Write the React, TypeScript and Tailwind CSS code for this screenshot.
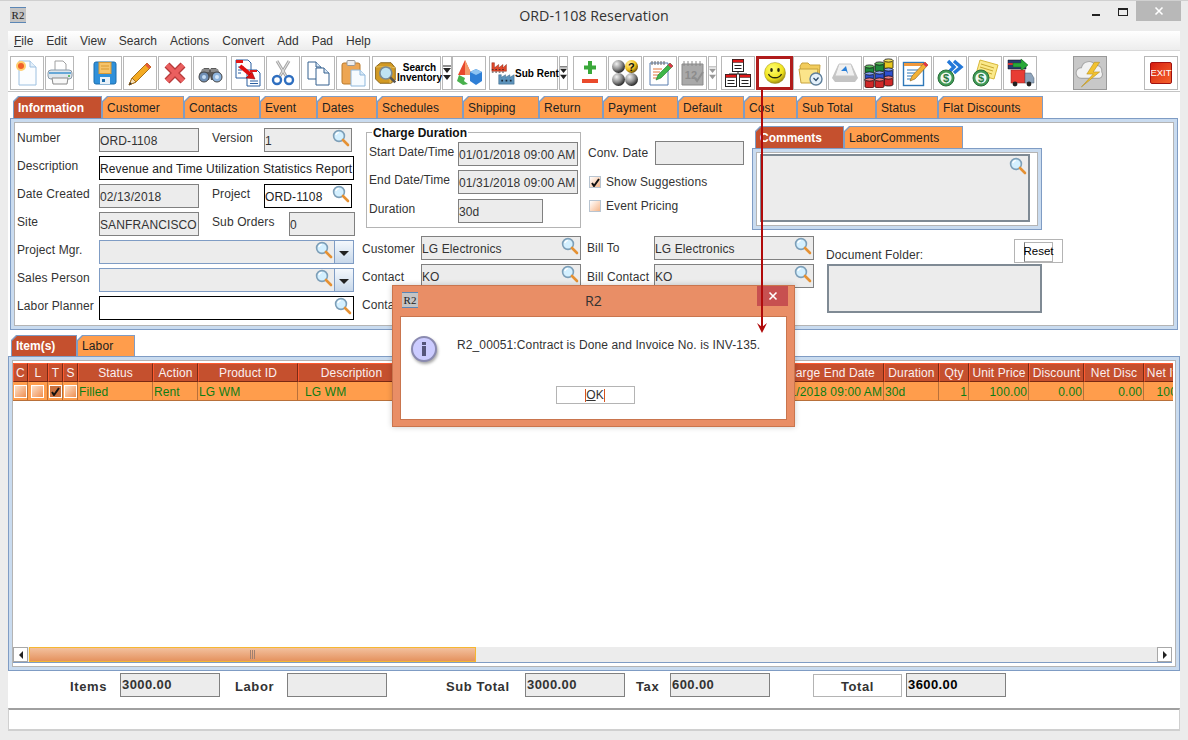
import type { ReactNode } from "react";

const R2Logo = () => (
  <div className="w-[16px] h-[16px] bg-[#c4c4c4] border-y border-[#5b86b5] flex items-center justify-center overflow-hidden shrink-0">
    <span className="text-[11px] leading-none text-[#222] font-['Liberation_Serif',serif]">R2</span>
  </div>
);

const Mag = () => (
  <svg width="18" height="18" viewBox="0 0 18 18" className="shrink-0">
    <circle cx="7" cy="7" r="5.4" fill="#d4f0ff" stroke="#7d9fb8" strokeWidth="1.6" />
    <path d="M3.8 6a3.5 3.5 0 0 1 3-2.6" stroke="#fff" strokeWidth="1.4" fill="none" />
    <path d="M11 11l5 5" stroke="#e59133" strokeWidth="2.6" strokeLinecap="round" />
  </svg>
);

const Drop = ({ gray }: { gray?: boolean }) => {
  const c = gray ? "#999" : "#222";
  return (
    <svg width="8" height="16" viewBox="0 0 8 16">
      <path d="M0 1h8" stroke={c} />
      <path d="M0 3h8L4 8z" fill={c} />
      <path d="M0 10h8l-4 5z" fill={c} />
    </svg>
  );
};

const Ico = ({ s = 28, children }: { s?: number; children: ReactNode }) => (
  <svg width={s} height={s} viewBox="0 0 28 28" className="shrink-0">
    {children}
  </svg>
);

const IconNew = () => (
  <Ico>
    <path d="M6 2h11l6 6v18H6z" fill="#fbfdff" stroke="#9dc0e0" />
    <path d="M17 2v6h6" fill="#e4eff9" stroke="#9dc0e0" />
    <circle cx="8" cy="7" r="5" fill="#ffcf70" />
    <circle cx="8" cy="7" r="3" fill="#f0602a" />
  </Ico>
);
const IconPrint = () => (
  <Ico>
    <path d="M9 2h8l3 3v9H9z" fill="#fff" stroke="#a0a0a0" />
    <rect x="2" y="11" width="24" height="9" rx="3" fill="#dfe6ec" stroke="#8a9aa8" />
    <path d="M3 14h22" stroke="#3f93d0" strokeWidth="1.5" />
    <path d="M6 19h16l-1 6H7z" fill="#f8f8f8" stroke="#8a8a8a" />
    <circle cx="23" cy="17" r="1" fill="#3fae49" />
  </Ico>
);
const IconSave = () => (
  <Ico>
    <rect x="3" y="3" width="22" height="22" rx="2" fill="#2f90da" stroke="#1c6cab" />
    <rect x="8" y="3.5" width="12" height="11" fill="#f6c46a" stroke="#d89a35" />
    <path d="M10 7h8M10 10h8" stroke="#d89a35" />
    <rect x="9" y="18" width="10" height="7" fill="#e8f1f8" />
    <rect x="11" y="20" width="3" height="3" fill="#1c6cab" />
  </Ico>
);
const IconPencil = () => (
  <Ico>
    <path d="M21 4l4 4-15 15-7 3 3-7z" fill="#f4ab23" stroke="#a9721c" />
    <path d="M6 19l4 4-7 3z" fill="#f6dfb8" stroke="#a9721c" />
    <path d="M21 4l4 4-2 2-4-4z" fill="#e55a3a" />
    <path d="M3 26l3-1-2-2z" fill="#333" />
  </Ico>
);
const IconDelete = () => (
  <Ico>
    <path d="M6 6l16 16M22 6L6 22" stroke="#b83a3a" strokeWidth="7" />
    <path d="M6 6l16 16M22 6L6 22" stroke="#ea5f5f" strokeWidth="4.5" />
  </Ico>
);
const IconBinoc = () => (
  <Ico>
    <path d="M3 15l5-6h5l1 2 1-2h5l5 6-4 6h-6l-1-4-1 4H7z" fill="#5a5a5a" />
    <path d="M6 10h7v3H5zM15 10h7l1 3h-8z" fill="#8b8b8b" />
    <circle cx="8" cy="18" r="5" fill="#6f8fb5" stroke="#444" />
    <circle cx="21" cy="18" r="5" fill="#8db3dc" stroke="#444" />
    <circle cx="8" cy="18" r="2" fill="#c4dcf4" />
    <circle cx="21" cy="18" r="2" fill="#d6e9fa" />
  </Ico>
);
const IconCopyArrow = () => (
  <Ico>
    <path d="M2 1h12l3 3v15H2z" fill="#fff" stroke="#2b5fa0" />
    <rect x="2" y="1" width="7" height="3" fill="#e01818" />
    <path d="M4 8h6M4 11h4M4 14h3" stroke="#2b5fa0" />
    <path d="M13 11h10l3 3v13H13z" fill="#fff" stroke="#2b5fa0" />
    <rect x="16" y="11" width="7" height="2" fill="#e01818" />
    <path d="M16 22h8M16 24.5h8" stroke="#2b5fa0" />
    <path d="M6 7l11 9" stroke="#e01010" strokeWidth="4" />
    <path d="M21 20l-9-1 6-6z" fill="#e01010" stroke="#700" strokeWidth=".5" />
  </Ico>
);
const IconCut = () => (
  <Ico>
    <path d="M8 2l9 15M20 2l-9 15" stroke="#a8a8a8" strokeWidth="3" />
    <path d="M8 2l9 15M20 2l-9 15" stroke="#e4e4e4" strokeWidth="1" />
    <circle cx="8" cy="21" r="4" fill="none" stroke="#2f6fc0" strokeWidth="2.4" />
    <circle cx="20" cy="21" r="4" fill="none" stroke="#2f6fc0" strokeWidth="2.4" />
  </Ico>
);
const Doc = ({ x, y }: { x: number; y: number }) => (
  <g transform={`translate(${x} ${y})`}>
    <path d="M0 0h8l5 5v12H0z" fill="#fff" stroke="#34608f" />
    <path d="M8 0v5h5" fill="#d8e6f4" stroke="#34608f" />
  </g>
);
const IconCopy = () => (
  <Ico>
    <Doc x={4} y={3} />
    <Doc x={12} y={9} />
  </Ico>
);
const IconPaste = () => (
  <Ico>
    <rect x="3" y="4" width="18" height="21" rx="2" fill="#eda653" stroke="#b97a2c" />
    <rect x="8" y="1.5" width="8" height="5" rx="1" fill="#eee" stroke="#999" />
    <path d="M12 11h9l5 5v11H12z" fill="#f6fbff" stroke="#8fb8dc" />
    <path d="M21 11v5h5" fill="#d8e8f5" stroke="#8fb8dc" />
  </Ico>
);
const IconSearchBox = () => (
  <Ico s={24}>
    <path d="M3 7l6-5h12l5 6v14l-5 4H8l-5-5z" fill="#d29a24" stroke="#7d5a12" />
    <path d="M3 7h17l6 1M20 7v19" stroke="#f4cf6c" />
    <circle cx="15" cy="14" r="7" fill="#bfe3f2" stroke="#7a8a94" strokeWidth="2" />
    <path d="M20 19l6 6" stroke="#555" strokeWidth="3" />
  </Ico>
);
const IconShapes = () => (
  <Ico>
    <path d="M10 1l7 15H3z" fill="#e8482c" />
    <path d="M10 1l7 15h-7z" fill="#f59a6a" />
    <path d="M15 13l6-3 6 3v9l-6 4-6-4z" fill="#2f7fd6" />
    <path d="M15 13l6 3 6-3-6-3z" fill="#8fc4f2" />
    <path d="M4 16l-2 6 6 4 5-1-4-3 1-3z" fill="#48b04c" />
  </Ico>
);
const IconFactory = () => (
  <Ico s={24}>
    <path d="M1 2h3v6l5-4v4l5-4v4l4-4v8H1z" fill="#e2482a" stroke="#7a2110" strokeWidth=".5" />
    <path d="M1 10h15M1 13h15" stroke="#3a2a2a" strokeDasharray="2 2" />
    <path d="M9 16h3v3l5-3v3l5-3v3l5-3v11H9z" fill="#5d93bb" stroke="#2f5a7a" strokeWidth=".5" />
    <path d="M12 23h12" stroke="#1a2a3a" strokeWidth="2" strokeDasharray="2 3" />
  </Ico>
);
const IconPlusMinus = () => (
  <Ico>
    <path d="M14 2v13M8 8.5h12" stroke="#3aa83a" strokeWidth="4" />
    <path d="M6 22h16" stroke="#ea4a2c" strokeWidth="4" />
  </Ico>
);
const IconSpheres = () => (
  <svg width="28" height="28" viewBox="0 0 28 28" className="shrink-0">
    <defs>
      <radialGradient id="ball" cx="35%" cy="30%" r="75%">
        <stop offset="0%" stopColor="#f2f2f2" />
        <stop offset="55%" stopColor="#8c8c8c" />
        <stop offset="100%" stopColor="#1c1c1c" />
      </radialGradient>
      <radialGradient id="ballY" cx="35%" cy="30%" r="75%">
        <stop offset="0%" stopColor="#fff3a8" />
        <stop offset="60%" stopColor="#f2c018" />
        <stop offset="100%" stopColor="#5a4000" />
      </radialGradient>
    </defs>
    <circle cx="7.5" cy="7.5" r="6.5" fill="url(#ball)" />
    <circle cx="20.5" cy="7.5" r="6.5" fill="url(#ballY)" />
    <circle cx="7.5" cy="20.5" r="6.5" fill="url(#ball)" />
    <circle cx="20.5" cy="20.5" r="6.5" fill="url(#ball)" />
    <text x="20.5" y="11.5" textAnchor="middle" fontSize="11" fontWeight="700" fill="#111" fontFamily="Liberation Sans">?</text>
  </svg>
);
const IconNote = () => (
  <Ico>
    <path d="M4 4h18v22H4z" fill="#fff" stroke="#5a7fb0" />
    <path d="M6 2v4M9 2v4M12 2v4M15 2v4M18 2v4" stroke="#666" />
    <path d="M7 10h9M7 13h7M7 16h6M7 19h5" stroke="#e2763a" />
    <path d="M24 4l3 3-12 12-5 2 2-5z" fill="#3cb648" stroke="#1e7a2a" strokeWidth=".6" />
    <path d="M24 4l3 3-2 2-3-3z" fill="#e0344a" />
  </Ico>
);
const IconCal = () => (
  <Ico>
    <path d="M3 5h21v21H3z" fill="#a9a9a9" stroke="#8a8a8a" />
    <path d="M5 2v5M9 2v5M13 2v5M17 2v5M21 2v5" stroke="#8a8a8a" />
    <text x="12" y="20" textAnchor="middle" fontSize="11" fontWeight="700" fill="#8c8c8c" fontFamily="Liberation Sans">12</text>
    <path d="M15 18l3 4 6-9" stroke="#8f8f8f" strokeWidth="2" fill="none" />
  </Ico>
);
const OrgDoc = ({ x, y }: { x: number; y: number }) => (
  <g transform={`translate(${x} ${y})`}>
    <rect x="0" y="0" width="11" height="12" fill="#fff" stroke="#222" />
    <rect x="0" y="0" width="11" height="3" fill="#e01818" stroke="#222" strokeWidth=".5" />
    <path d="M2 6h7M2 9h7" stroke="#222" />
  </g>
);
const IconOrg = () => (
  <Ico>
    <path d="M14 12v3M5 17v-2h18v2" stroke="#222" fill="none" />
    <OrgDoc x={8.5} y={0.5} />
    <OrgDoc x={1.5} y={15.5} />
    <OrgDoc x={15.5} y={15.5} />
  </Ico>
);
const IconSmile = () => (
  <svg width="24" height="24" viewBox="0 0 24 24" className="shrink-0">
    <defs>
      <radialGradient id="smile" cx="40%" cy="30%" r="75%">
        <stop offset="0%" stopColor="#ffff70" />
        <stop offset="65%" stopColor="#efe21c" />
        <stop offset="100%" stopColor="#8c7a10" />
      </radialGradient>
    </defs>
    <circle cx="12" cy="12" r="10.5" fill="url(#smile)" stroke="#9a8a20" strokeWidth=".5" />
    <ellipse cx="8.5" cy="9" rx="1.3" ry="2" fill="#2a2a10" />
    <ellipse cx="15.5" cy="9" rx="1.3" ry="2" fill="#2a2a10" />
    <path d="M5.5 13c2 5 11 5 13 0" stroke="#2a2a10" strokeWidth="1.3" fill="none" />
  </svg>
);
const IconFolderClock = () => (
  <Ico>
    <path d="M4 7l2-3h6l2 2h10l-1 14H6z" fill="#f2cc5c" stroke="#c7a23c" />
    <path d="M3 10h19l-2 14H5z" fill="#fbe48a" stroke="#c7a23c" />
    <circle cx="20" cy="20" r="6" fill="#e4f0fa" stroke="#5f7f9a" strokeWidth="1.4" />
    <path d="M17.5 19l2.5 2.5 2.5-3" stroke="#2b4a66" strokeWidth="1.2" fill="none" />
  </Ico>
);
const IconKey = () => (
  <Ico>
    <path d="M7 6h14l6 13-3 4H4l-3-4z" fill="#c4c4c4" />
    <path d="M8 5h12l4 12H4z" fill="#f0f0f0" stroke="#c8c8c8" />
    <path d="M10 12l5-5 2 8-2-3z" fill="#2a7fd8" />
  </Ico>
);
const Barrel = ({ x, y, top, body }: { x: number; y: number; top: string; body: string }) => (
  <g transform={`translate(${x} ${y})`}>
    <path d="M0 1.5v7c0 2 9 2 9 0v-7z" fill={body} stroke="#111" strokeWidth=".8" />
    <ellipse cx="4.5" cy="1.5" rx="4.5" ry="1.6" fill={top} stroke="#111" strokeWidth=".8" />
  </g>
);
const IconBarrels = () => (
  <svg width="32" height="30" viewBox="0 0 32 30" className="shrink-0">
    <Barrel x={20} y={1} top="#f0e060" body="#e8c820" />
    <Barrel x={20} y={10} top="#8aa4f0" body="#2e50d0" />
    <Barrel x={20} y={18} top="#f08080" body="#d02828" />
    <Barrel x={11} y={4} top="#60c060" body="#1e8a3a" />
    <Barrel x={11} y={13} top="#8aa4f0" body="#2e50d0" />
    <Barrel x={11} y={20} top="#f08080" body="#d02828" />
    <Barrel x={1} y={7} top="#60c060" body="#1e8a3a" />
    <Barrel x={1} y={14} top="#8aa4f0" body="#2e50d0" />
    <Barrel x={1} y={20} top="#f08080" body="#d02828" />
  </svg>
);
const IconDocPen = () => (
  <Ico>
    <rect x="2.5" y="3.5" width="20" height="23" fill="#fff" stroke="#2f78b8" strokeWidth="1.4" />
    <rect x="3" y="4" width="19" height="3" fill="#f0983c" />
    <path d="M6 11h11M6 14h8M6 17h7M6 20h5" stroke="#2f78b8" strokeWidth="1.2" />
    <path d="M24 3l3 3-13 14-5 2 2-5z" fill="#f2b134" stroke="#8a6018" strokeWidth=".6" />
    <path d="M24 3l3 3-2 2-3-3z" fill="#e0344a" />
  </Ico>
);
const Coin = () => (
  <g>
    <circle cx="10" cy="19" r="8" fill="#3f9a55" stroke="#2a6e3a" />
    <circle cx="10" cy="19" r="5.6" fill="#f2f8f2" />
    <text x="10" y="23" textAnchor="middle" fontSize="11" fontWeight="700" fill="#2a7a40" fontFamily="Liberation Sans">$</text>
  </g>
);
const IconCoinArrow = () => (
  <Ico>
    <path d="M12 2l6 6-6 6M18 2l7 6-7 6" stroke="#2478d8" strokeWidth="3.4" fill="none" />
    <Coin />
  </Ico>
);
const IconCoinNote = () => (
  <Ico>
    <path d="M9 1l18 5-4 14-18-5z" fill="#fbe98a" stroke="#d8b83a" />
    <path d="M10 5l13 4M9 8l13 4M8 11l13 4" stroke="#c8a830" />
    <Coin />
  </Ico>
);
const IconTrucks = () => (
  <svg width="30" height="30" viewBox="0 0 30 30" className="shrink-0">
    <path d="M3 2h14l4 4v5H3z" fill="#2a3a70" stroke="#111" strokeWidth=".5" />
    <path d="M3 6h12" stroke="#d03030" strokeWidth="2" />
    <path d="M8 5h8V1l7 6-7 6V9H8z" fill="#28a838" stroke="#126a1e" strokeWidth=".5" />
    <rect x="6" y="12" width="14" height="13" fill="#e83c34" stroke="#8a1c18" strokeWidth=".5" />
    <path d="M20 15h6l3 5v5h-9z" fill="#8ea4bc" stroke="#4a5a6a" strokeWidth=".5" />
    <circle cx="10" cy="26" r="2.4" fill="#222" />
    <circle cx="24" cy="26" r="2.4" fill="#222" />
  </svg>
);
const IconBolt = () => (
  <Ico s={30}>
    <path d="M6 19a5 5 0 0 1 0-10 7 7 0 0 1 13-2 5 5 0 0 1 6 6 4 4 0 0 1-2 6z" fill="#f2f2f2" stroke="#a8a8a8" />
    <path d="M18 4l-7 11h6L6 27l17-14h-6l6-9z" fill="#f2c230" stroke="#b08818" strokeWidth=".5" />
  </Ico>
);

const Btn = ({ className = "w-[34px]", children }: { className?: string; children?: ReactNode }) => (
  <div className={`h-[34px] border border-[#b8b8b8] bg-white flex items-center justify-center shrink-0 ${className}`}>
    {children}
  </div>
);

const Tab = ({ w, label, active }: { w: string; label: string; active?: boolean }) => (
  <div className={`h-full p-px pb-0 bg-[#7f9cc4] shrink-0 [clip-path:polygon(5px_0,100%_0,100%_100%,0_100%,0_5px)] ${w}`}>
    <div
      className={`h-full pl-[4px] flex items-center whitespace-nowrap text-[12px] [clip-path:polygon(5px_0,100%_0,100%_100%,0_100%,0_5px)] ${
        active ? "bg-[#c5502e] text-white font-bold tracking-normal" : "bg-[#ff9d4c] text-[#222]"
      }`}
    >
      {label}
    </div>
  </div>
);

const Frame = ({ className, children }: { className: string; children: ReactNode }) => (
  <div className={`border border-[#7f9cc4] bg-[#c9dbef] p-[3px] ${className}`}>
    <div className="h-full border border-[#b4b4b4] bg-white">{children}</div>
  </div>
);

const Label = ({ w, children, className = "" }: { w: string; children: ReactNode; className?: string }) => (
  <div className={`h-[24px] flex items-center pb-[5px] text-[12px] text-[#333] whitespace-nowrap shrink-0 ${w} ${className}`}>
    {children}
  </div>
);

type FieldKind = "gray" | "black" | "blue";

const Field = ({ w, value, kind = "gray", mag, drop }: { w: string; value?: string; kind?: FieldKind; mag?: boolean; drop?: boolean }) => {
  const skin =
    kind === "black" ? "border-black bg-white text-[#222]" : kind === "blue" ? "border-[#7f9cc4] bg-[#ececec]" : "border-[#808080] bg-[#ececec] text-[#333]";
  return (
    <div className={`h-[24px] border flex shrink-0 overflow-hidden ${skin} ${w}`}>
      <div className="flex-1 min-w-0 pt-[2px] flex items-center text-[12px] whitespace-nowrap overflow-hidden">{value}</div>
      {mag && (
        <div className="pr-px shrink-0">
          <Mag />
        </div>
      )}
      {drop && (
        <div className="w-[19px] h-full border-l border-[#7f9cc4] bg-gradient-to-b from-[#f4f8fc] to-[#c8d8ea] flex items-center justify-center shrink-0">
          <div className="w-0 h-0 border-x-[5px] border-x-transparent border-t-[5px] border-t-[#222] mt-[3px]" />
        </div>
      )}
    </div>
  );
};

const Check = ({ on }: { on?: boolean }) => (
  <div className="w-[12px] h-[12px] border border-[#b8c4d0] bg-gradient-to-br from-white to-[#f4b68a] flex items-center justify-center shrink-0">
    {on && (
      <svg width="9" height="9" viewBox="0 0 9 9">
        <path d="M1 5l2 3 5-7" stroke="#111" strokeWidth="2" fill="none" />
      </svg>
    )}
  </div>
);

const CellCheck = ({ on }: { on?: boolean }) => (
  <div className="h-full flex items-center justify-center border-r border-[#b8703a]">
    <div className={`w-[13px] h-[13px] border border-white flex items-center justify-center ${on ? "bg-[#c8703e]" : "bg-gradient-to-br from-[#fbe0c8] to-[#ee8f50]"}`}>
      {on && (
        <svg width="9" height="9" viewBox="0 0 9 9">
          <path d="M1 5l2 3 5-7" stroke="#111" strokeWidth="2" fill="none" />
        </svg>
      )}
    </div>
  </div>
);

const TotalField = ({ w = "w-[100px]", value, strong }: { w?: string; value?: string; strong?: boolean }) => (
  <div className={`h-[24px] border border-[#808080] bg-[#ececec] pl-px pb-px flex items-center text-[13px] font-bold tracking-[0.4px] shrink-0 ${strong ? "text-black" : "text-[#333]"} ${w}`}>
    {value}
  </div>
);

const TotalLabel = ({ w, children }: { w: string; children: ReactNode }) => (
  <div className={`text-[13px] font-bold tracking-[0.6px] text-[#333] whitespace-nowrap shrink-0 pt-[3px] ${w}`}>{children}</div>
);

const columns = ["C", "L", "T", "S", "Status", "Action", "Product ID", "Description", "", "Charge End Date", "Duration", "Qty", "Unit Price", "Discount", "Net Disc", "Net Item"];
const menus = ["Edit", "View", "Search", "Actions", "Convert", "Add", "Pad", "Help"];

export default function App() {
  return (
    <div className="relative w-[1188px] h-[740px] overflow-hidden bg-[#ececec] border-t border-[#d0d0d0] flex flex-col font-['Liberation_Sans',Arial,sans-serif] text-[12px] tracking-[0.12px] text-[#333]">
      {/* title bar */}
      <div className="h-[30px] shrink-0 grid grid-cols-[1fr_auto_1fr] tracking-normal">
        <div className="pl-[10px] pt-[6px]">
          <R2Logo />
        </div>
        <div className="pt-[5px] text-[14.25px] leading-[20px] text-[#333] font-['Open_Sans',sans-serif]">ORD-1108 Reservation</div>
        <div className="flex justify-end items-start pr-[7px]">
          <div className="w-[8px] h-[2px] bg-[#222] mt-[13px]" />
          <div className="w-[10px] h-[8px] border border-[#222] border-t-2 mt-[7px] ml-[18px]" />
          <div className="w-[45px] h-[20px] bg-[#b8b8b8] ml-[8px] flex items-center justify-center">
            <svg width="10" height="10" viewBox="0 0 10 10">
              <path d="M1.5 1.5l7 7M8.5 1.5l-7 7" stroke="#fff" strokeWidth="1.6" />
            </svg>
          </div>
        </div>
      </div>

      <div className="mx-2 h-[700px] shrink-0 bg-white flex flex-col">
        {/* menu */}
        <div className="h-[20px] shrink-0 bg-gradient-to-b from-white to-[#ededed] border-b border-[#d8d8d8] flex items-center gap-[13px] pl-[6px] text-[12px] tracking-normal text-[#333]">
          <span>
            <span className="underline">F</span>ile
          </span>
          {menus.map((m) => (
            <span key={m}>{m}</span>
          ))}
        </div>

        {/* toolbar */}
        <div className="h-[41px] shrink-0 border-b border-[#c4c4c4] pl-[2px] pt-[5px] flex gap-px">
          <Btn><IconNew /></Btn>
          <Btn className="w-[29px]"><IconPrint /></Btn>
          <Btn className="w-[34px] ml-[13px]"><IconSave /></Btn>
          <Btn><IconPencil /></Btn>
          <Btn><IconDelete /></Btn>
          <Btn><IconBinoc /></Btn>
          <Btn className="w-[34px] ml-[3px]"><IconCopyArrow /></Btn>
          <Btn><IconCut /></Btn>
          <Btn><IconCopy /></Btn>
          <Btn><IconPaste /></Btn>
          <Btn className="w-[69px] ml-px justify-start">
            <IconSearchBox />
            <div className="text-[10px] leading-[10px] font-bold text-black text-center tracking-normal whitespace-nowrap">
              Search
              <br />
              Inventory
            </div>
          </Btn>
          <Btn className="w-[10px]"><Drop /></Btn>
          <Btn className="w-[34px] -ml-px"><IconShapes /></Btn>
          <Btn className="w-[69px] ml-[2px] pl-px justify-start">
            <IconFactory />
            <span className="text-[10px] font-bold text-black tracking-normal whitespace-nowrap">Sub Rent</span>
          </Btn>
          <Btn className="w-[9px]"><Drop /></Btn>
          <Btn className="w-[34px] ml-[4px]"><IconPlusMinus /></Btn>
          <Btn><IconSpheres /></Btn>
          <Btn><IconNote /></Btn>
          <Btn className="w-[29px]"><IconCal /></Btn>
          <Btn className="w-[9px]"><Drop gray /></Btn>
          <Btn className="w-[34px] ml-[3px]"><IconOrg /></Btn>
          <div className="h-[34px] w-[37px] border-[3px] border-[#b01c1c] bg-white flex items-center justify-center shrink-0">
            <IconSmile />
          </div>
          <Btn className="w-[34px] -ml-px"><IconFolderClock /></Btn>
          <Btn><IconKey /></Btn>
          <Btn><IconBarrels /></Btn>
          <Btn><IconDocPen /></Btn>
          <Btn><IconCoinArrow /></Btn>
          <Btn><IconCoinNote /></Btn>
          <Btn><IconTrucks /></Btn>
          <Btn className="w-[34px] ml-[35px] !bg-[#c8c8c8] !border-[#999]"><IconBolt /></Btn>
          <Btn className="w-[34px] ml-[36px]">
            <div className="w-[22px] h-[22px] rounded-[2px] bg-gradient-to-br from-[#d81810] to-[#f4602a] border border-[#a01010] flex items-center justify-center text-[9.5px] tracking-normal text-white">EXIT</div>
          </Btn>
        </div>

        {/* header tabs */}
        <div className="h-[22px] mt-[4px] shrink-0 pl-[5px] flex">
          <Tab w="w-[89px]" label="Information" active />
          <Tab w="w-[82px]" label="Customer" />
          <Tab w="w-[76px]" label="Contacts" />
          <Tab w="w-[57px]" label="Event" />
          <Tab w="w-[60px]" label="Dates" />
          <Tab w="w-[86px]" label="Schedules" />
          <Tab w="w-[76px]" label="Shipping" />
          <Tab w="w-[64px]" label="Return" />
          <Tab w="w-[75px]" label="Payment" />
          <Tab w="w-[66px]" label="Default" />
          <Tab w="w-[53px]" label="Cost" />
          <Tab w="w-[79px]" label="Sub Total" />
          <Tab w="w-[62px]" label="Status" />
          <Tab w="w-[105px]" label="Flat Discounts" />
        </div>

        {/* header form */}
        <Frame className="h-[212px] ml-[2px] mr-[2px] shrink-0">
          <div className="h-full flex pl-[2px]">
            {/* left column */}
            <div className="w-[345px] pt-[5px] flex flex-col gap-[4px] shrink-0">
              <div className="flex">
                <Label w="w-[82px]">Number</Label>
                <Field w="w-[100px]" value="ORD-1108" />
                <Label w="w-[65px]" className="pl-[13px]">Version</Label>
                <Field w="w-[88px]" value="1" mag />
              </div>
              <div className="flex">
                <Label w="w-[82px]">Description</Label>
                <Field w="w-[255px]" kind="black" value="Revenue and Time Utilization Statistics Report" />
              </div>
              <div className="flex">
                <Label w="w-[82px]">Date Created</Label>
                <Field w="w-[100px]" value="02/13/2018" />
                <Label w="w-[65px]" className="pl-[13px]">Project</Label>
                <Field w="w-[88px]" kind="black" value="ORD-1108" mag />
              </div>
              <div className="flex">
                <Label w="w-[82px]">Site</Label>
                <Field w="w-[100px]" value="SANFRANCISCO" />
                <Label w="w-[90px]" className="pl-[13px]">Sub Orders</Label>
                <Field w="w-[66px]" value="0" />
              </div>
              <div className="flex">
                <Label w="w-[82px]">Project Mgr.</Label>
                <Field w="w-[255px]" kind="blue" mag drop />
              </div>
              <div className="flex">
                <Label w="w-[82px]">Sales Person</Label>
                <Field w="w-[255px]" kind="blue" mag drop />
              </div>
              <div className="flex">
                <Label w="w-[82px]">Labor Planner</Label>
                <Field w="w-[255px]" kind="black" mag />
              </div>
            </div>

            {/* middle column */}
            <div className="w-[390px] shrink-0 pt-[9px]">
              <div className="flex h-[96px] pl-[4px]">
                <div className="relative w-[215px] border border-[#b4b4b4] pl-[2px] pt-[9px] flex flex-col gap-[4px]">
                  <div className="absolute left-[5px] -top-[7px] bg-white px-px text-[12px] leading-[14px] font-bold tracking-normal text-[#111]">Charge Duration</div>
                  <div className="flex">
                    <Label w="w-[89px]">Start Date/Time</Label>
                    <Field w="w-[120px]" value="01/01/2018 09:00 AM" />
                  </div>
                  <div className="flex">
                    <Label w="w-[89px]">End Date/Time</Label>
                    <Field w="w-[120px]" value="01/31/2018 09:00 AM" />
                  </div>
                  <div className="flex mt-px">
                    <Label w="w-[89px]">Duration</Label>
                    <Field w="w-[85px]" value="30d" />
                  </div>
                </div>
                <div className="pl-[7px] pt-[9px]">
                  <div className="flex items-center">
                    <div className="w-[67px] text-[12px] text-[#333]">Conv. Date</div>
                    <Field w="w-[89px]" />
                  </div>
                  <div className="flex items-center gap-[5px] pl-px mt-[11px] h-[12px]">
                    <Check on />
                    <span>Show Suggestions</span>
                  </div>
                  <div className="flex items-center gap-[5px] pl-px mt-[12px] h-[12px]">
                    <Check />
                    <span>Event Pricing</span>
                  </div>
                </div>
              </div>
              <div className="mt-[8px] flex flex-col gap-[4px]">
                <div className="flex">
                  <Label w="w-[59px]" className="!pb-0 pt-px">Customer</Label>
                  <Field w="w-[160px]" value="LG Electronics" mag />
                  <Label w="w-[73px]" className="pl-[6px] !pb-0">Bill To</Label>
                  <Field w="w-[160px]" value="LG Electronics" mag />
                </div>
                <div className="flex">
                  <Label w="w-[59px]" className="!pb-0 pt-px">Contact</Label>
                  <Field w="w-[160px]" value="KO" mag />
                  <Label w="w-[73px]" className="pl-[6px] !pb-0 pt-px">Bill Contact</Label>
                  <Field w="w-[160px]" value="KO" mag />
                </div>
                <div className="flex">
                  <Label w="w-[59px]" className="!pb-0 pt-px">Contact</Label>
                </div>
              </div>
            </div>

            {/* comments column */}
            <div className="flex-1 min-w-0 pt-[3px]">
              <div className="h-[22px] pl-[3px] flex">
                <Tab w="w-[89px]" label="Comments" active />
                <Tab w="w-[119px]" label="LaborComments" />
              </div>
              <Frame className="w-[290px] h-[82px]">
                <div className="h-full pl-[3px] pt-px">
                  <div className="w-[270px] h-[68px] border-2 border-[#7f8a94] bg-[#ececec] flex justify-end pt-px pr-px">
                    <Mag />
                  </div>
                </div>
              </Frame>
              <div className="flex items-end pl-[74px] mt-[9px] h-[24px]">
                <div className="w-[188px] text-[12px] text-[#333] leading-[14px] pb-[1px]">Document Folder:</div>
                <div className="w-[49px] h-[24px] border border-[#b4b4b4] flex justify-center pt-[2px] shrink-0">
                  <div className="w-[29px] h-[20px] border border-[#b4b4b4] border-l-[#777] flex items-center justify-center text-[11.5px] tracking-normal font-medium text-black">Reset</div>
                </div>
              </div>
              <div className="ml-[75px] w-[215px] h-[49px] mt-px border-2 border-[#7f8a94] bg-[#ececec]" />
            </div>
          </div>
        </Frame>

        {/* item tabs */}
        <div className="h-[21px] mt-[5px] shrink-0 pl-[3px] flex">
          <Tab w="w-[66px]" label="Item(s)" active />
          <Tab w="w-[58px]" label="Labor" />
        </div>

        {/* items table */}
        <Frame className="h-[315px] shrink-0">
          <div className="h-full flex flex-col">
            <div className="flex-1 min-h-0 overflow-hidden mr-[2px]">
              <div className="w-[1208px] grid grid-cols-[15px_20px_15px_15px_75px_45px_100px_107px_366px_113px_55px_30px_60px_55px_60px_52px] grid-rows-[19px_19px] mt-[2px]">
                {columns.map((c, i) => (
                  <div key={i} className="bg-[#c5502e] border border-[#ff5a30] border-r-[#7a2a14] border-b-[#7a2a14] pt-px flex items-center justify-center text-[12px] text-[#fbeff0] whitespace-nowrap overflow-hidden">
                    {c}
                  </div>
                ))}
                <div className="bg-[#ff9d4c] col-span-16 border-b border-[#b8703a] row-start-2 col-start-1" />
                <div className="row-start-2 col-start-1"><CellCheck /></div>
                <div className="row-start-2 col-start-2"><CellCheck /></div>
                <div className="row-start-2 col-start-3"><CellCheck on /></div>
                <div className="row-start-2 col-start-4"><CellCheck /></div>
                <Cell col="col-start-5">Filled</Cell>
                <Cell col="col-start-6">Rent</Cell>
                <Cell col="col-start-7">LG WM</Cell>
                <Cell col="col-start-8" className="pl-[7px]">LG WM</Cell>
                <Cell col="col-start-9" />
                <Cell col="col-start-10" className="justify-end pr-px">01/31/2018 09:00 AM</Cell>
                <Cell col="col-start-11">30d</Cell>
                <Cell col="col-start-12" className="justify-end">1</Cell>
                <Cell col="col-start-13" className="justify-end">100.00</Cell>
                <Cell col="col-start-14" className="justify-end">0.00</Cell>
                <Cell col="col-start-15" className="justify-end">0.00</Cell>
                <Cell col="col-start-16" className="justify-end">100.00</Cell>
              </div>
            </div>
            {/* scrollbar */}
            <div className="h-[16px] mb-[3px] mr-[3px] flex shrink-0 bg-[#ececec] border-b border-[#7f9cc4]">
              <div className="w-[15px] border border-[#a8a8a8] bg-white flex items-center justify-center shrink-0">
                <div className="w-0 h-0 border-y-[4px] border-y-transparent border-r-[4px] border-r-[#222]" />
              </div>
              <div className="w-[447px] ml-px border border-[#f5b731] bg-gradient-to-b from-[#f2c09e] to-[#e4925e] flex items-center justify-center gap-px shrink-0">
                <div className="w-px h-[9px] bg-[#a08070]" />
                <div className="w-px h-[9px] bg-[#a08070]" />
                <div className="w-px h-[9px] bg-[#a08070]" />
              </div>
              <div className="flex-1" />
              <div className="w-[15px] border border-[#a8a8a8] bg-white flex items-center justify-center shrink-0">
                <div className="w-0 h-0 border-y-[4px] border-y-transparent border-l-[4px] border-l-[#222]" />
              </div>
            </div>
          </div>
        </Frame>

        {/* totals */}
        <div className="h-[37px] shrink-0 pt-[2px] pl-[62px] flex">
          <div className="flex items-center h-[24px]">
            <TotalLabel w="w-[50px]">Items</TotalLabel>
            <TotalField value="3000.00" />
            <div className="w-[15px]" />
            <TotalLabel w="w-[52px]">Labor</TotalLabel>
            <TotalField />
            <div className="w-[59px]" />
            <TotalLabel w="w-[79px]">Sub Total</TotalLabel>
            <TotalField value="3000.00" />
            <div className="w-[11px]" />
            <TotalLabel w="w-[34px]">Tax</TotalLabel>
            <TotalField value="600.00" />
            <div className="w-[43px]" />
            <div className="w-[89px] h-[23px] border border-[#b4b4b4] flex items-center justify-center shrink-0 mr-[4px]">
              <TotalLabel w="w-auto">Total</TotalLabel>
            </div>
            <TotalField value="3600.00" strong />
          </div>
        </div>

        {/* status bar */}
        <div className="h-[23px] shrink-0 border-t-2 border-t-[#a0a0a0] border-b-2 border-b-[#d0d0d0] border-x border-x-[#d0d0d0] bg-white" />
      </div>

      {/* message dialog */}
      <div className="absolute left-[392px] top-[284px] w-[403px] h-[142px] bg-[#e98e66] border border-[#c9754e] shadow-[0_0_6px_rgba(0,0,0,0.2)] flex flex-col">
        <div className="h-[30px] shrink-0 grid grid-cols-[1fr_auto_1fr]">
          <div className="pl-[9px] pt-[6px]">
            <R2Logo />
          </div>
          <div className="pt-[4px] text-[14.25px] leading-[22px] tracking-normal text-[#333] font-['Open_Sans',sans-serif]">R2</div>
          <div className="flex justify-end pr-[6px]">
            <div className="w-[31px] h-[20px] bg-[#c75050] flex items-center justify-center">
              <svg width="10" height="10" viewBox="0 0 10 10">
                <path d="M1.5 1.5l7 7M8.5 1.5l-7 7" stroke="#fff" strokeWidth="1.6" />
              </svg>
            </div>
          </div>
        </div>
        <div className="mx-[7px] h-[104px] shrink-0 border border-[#c9754e] bg-white flex flex-col">
          <div className="flex h-[69px] pl-[10px] pt-[19px]">
            <div className="w-[26px] h-[26px] rounded-full bg-[#ccccff] border-2 border-[#8a8ab0] shadow-[1px_2px_3px_rgba(0,0,0,0.35)] flex flex-col items-center justify-center gap-px shrink-0">
              <div className="w-[4px] h-[3px] bg-[#55557a]" />
              <div className="w-[4px] h-[10px] bg-[#55557a]" />
            </div>
            <div className="pl-[20px] pt-[2px] text-[12px] leading-[14px] whitespace-nowrap text-[#333]">R2_00051:Contract is Done and Invoice No. is INV-135.</div>
          </div>
          <div className="flex justify-center pl-[3px]">
            <div className="w-[79px] h-[18px] border border-[#b4b4b4] flex items-center justify-center text-[12px] text-[#333]">
              <span className="border-x border-[#d8541e] leading-[13px]">
                <span className="underline">O</span>K
              </span>
            </div>
          </div>
        </div>
      </div>

      {/* red annotation arrow */}
      <svg className="absolute left-[754px] top-[89px]" width="16" height="246" viewBox="0 0 16 246">
        <path d="M8 0v240" stroke="#b00a0a" strokeWidth="2" />
        <path d="M3 233l5 10 5-10-5 4z" fill="#b00a0a" />
      </svg>
    </div>
  );
}

function Cell({ col, className = "", children }: { col: string; className?: string; children?: ReactNode }) {
  return (
    <div className={`row-start-2 ${col} flex items-center px-px pt-[2px] border-r border-b border-[#b8703a] text-[12px] text-[#0b7d14] whitespace-nowrap overflow-hidden ${className}`}>
      {children}
    </div>
  );
}
